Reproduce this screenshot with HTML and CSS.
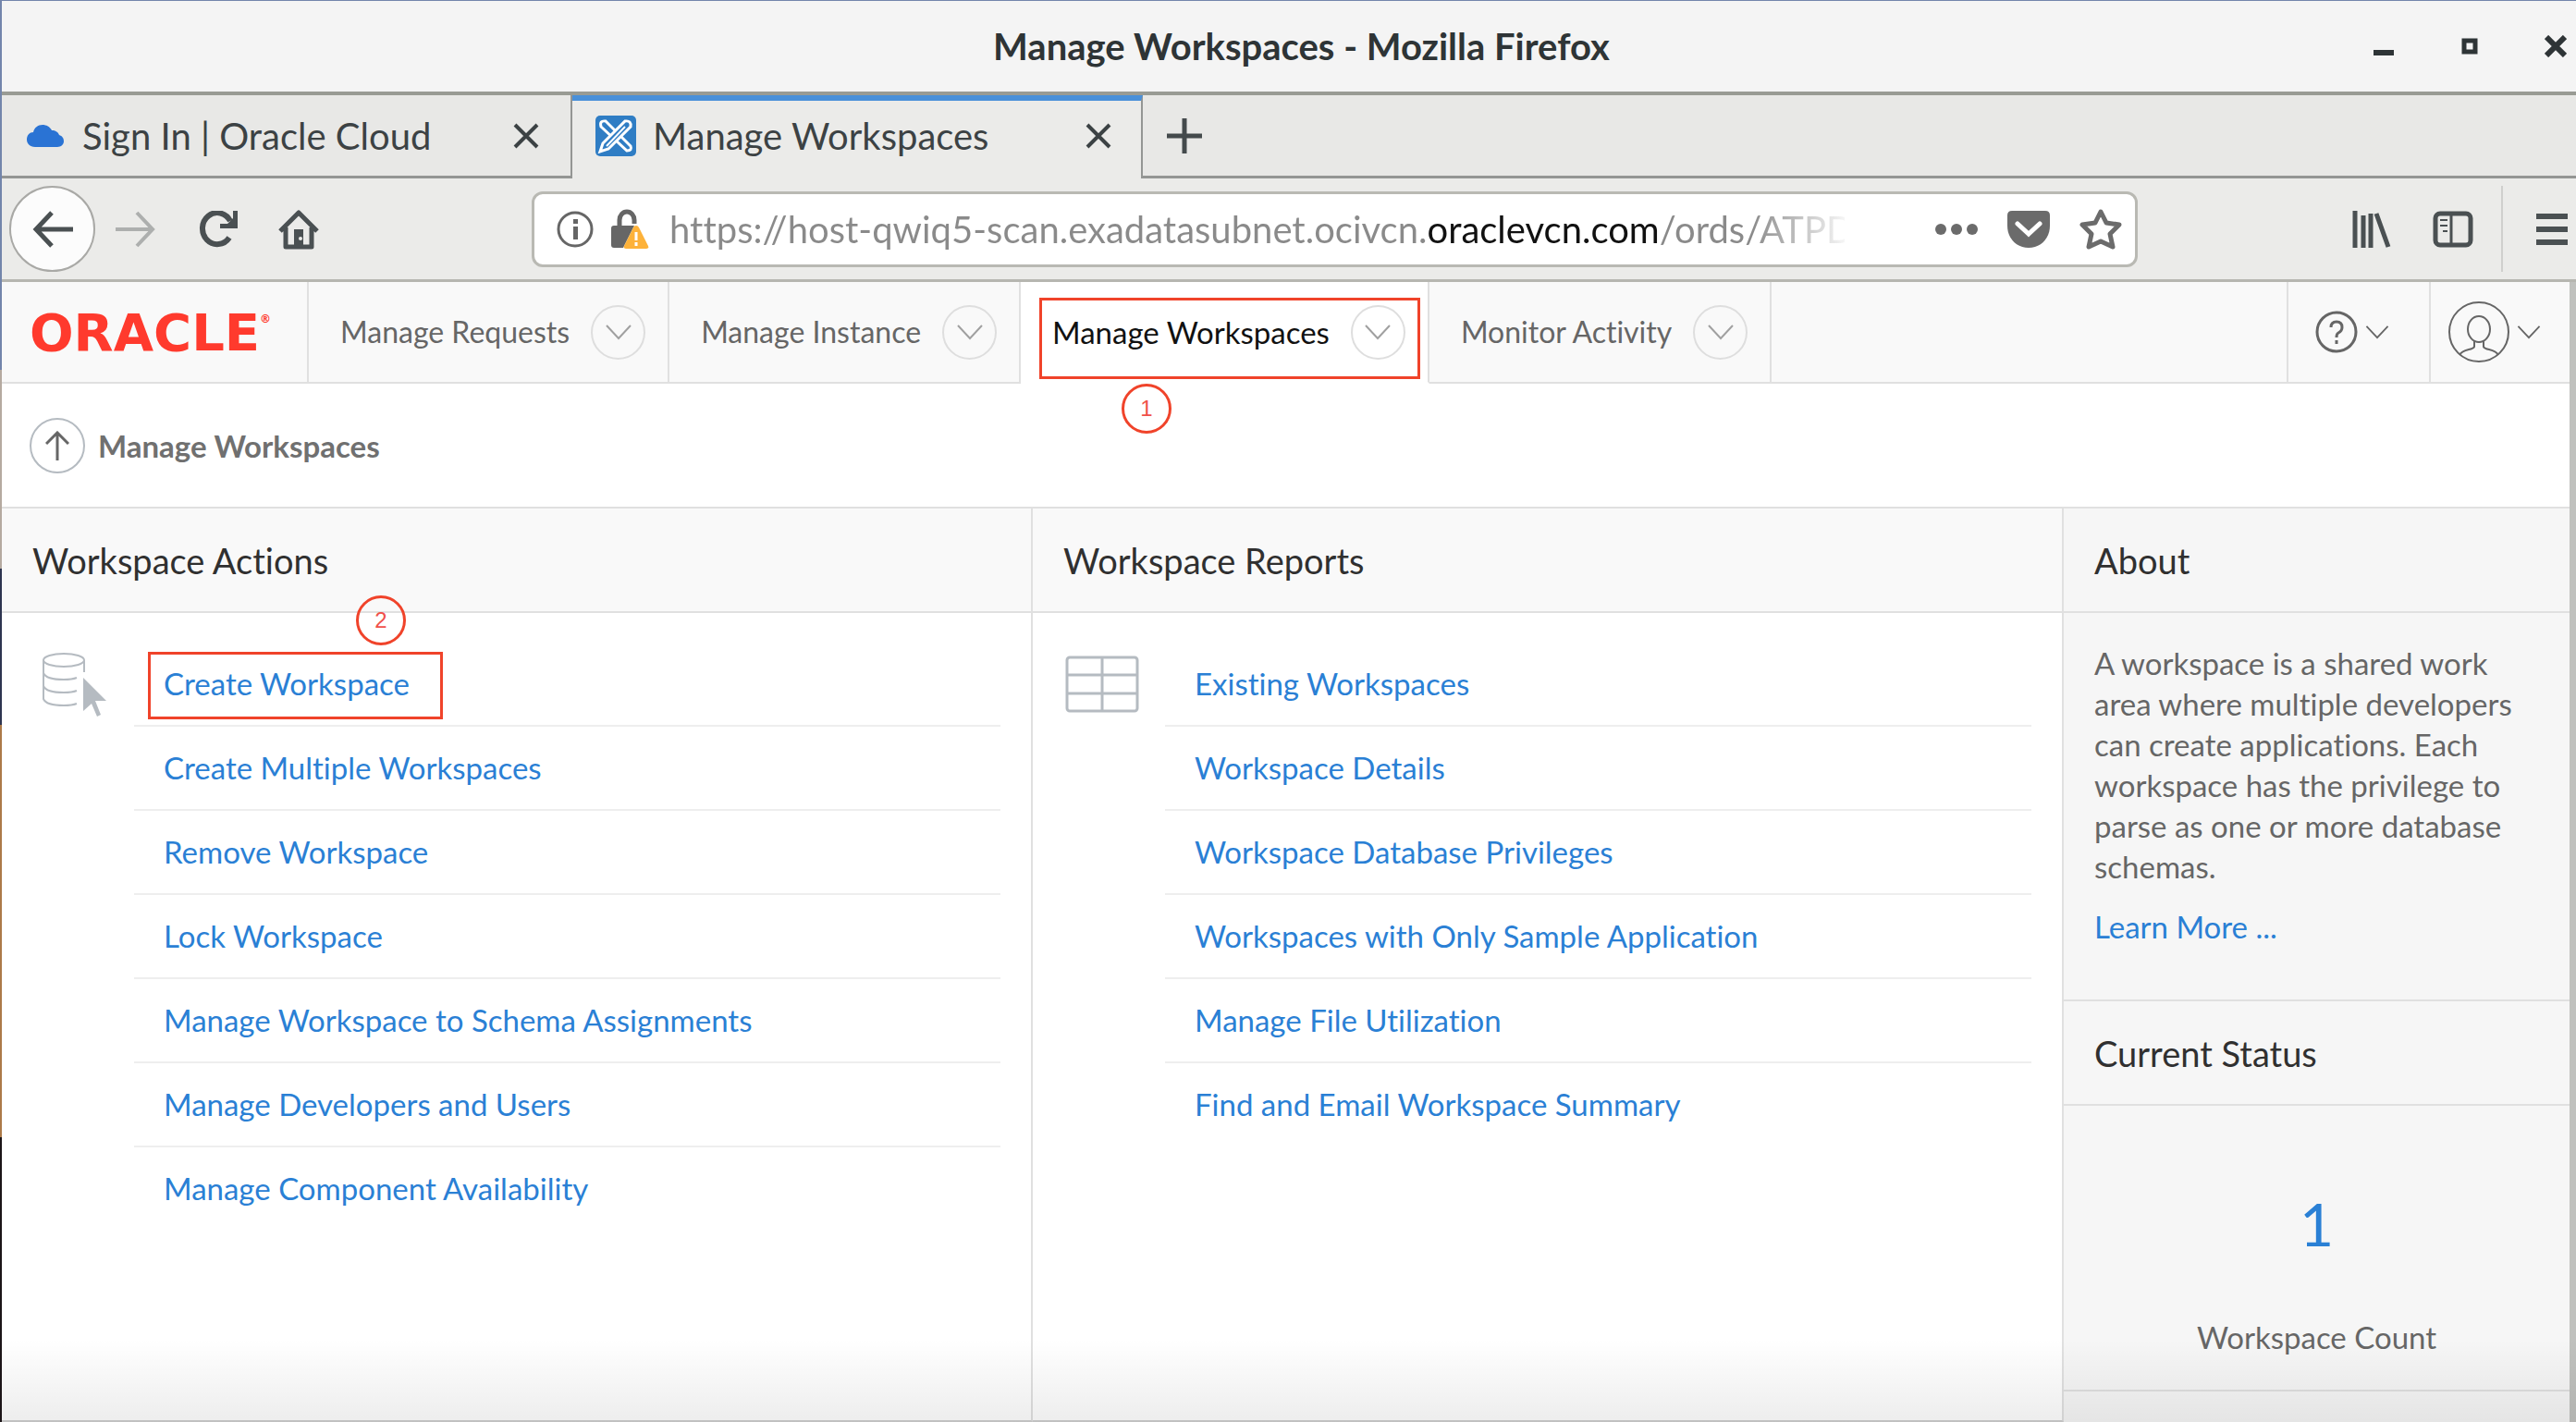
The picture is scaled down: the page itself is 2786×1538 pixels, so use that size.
FILE: index.html
```html
<!DOCTYPE html>
<html lang="en">
<head>
<meta charset="utf-8">
<title>Manage Workspaces</title>
<link rel="stylesheet" href="styles.css">
</head>
<body>
<svg class="sprite" aria-hidden="true">
  <symbol id="close" viewBox="0 0 28 28"><path d="M2 2L26 26M26 2L2 26" fill="none" stroke="currentColor" stroke-width="4"/></symbol>
  <symbol id="chevron" viewBox="0 0 28 18"><path d="M1 2L14 16L27 2" fill="none" stroke="currentColor" stroke-width="2"/></symbol>
</svg>
<div class="window">
  <header class="titlebar">
    <h1 class="titlebar-text">Manage Workspaces - Mozilla Firefox</h1>
    <div class="window-buttons">
      <button aria-label="Minimize"><svg width="24" height="24" viewBox="0 0 24 24"><path d="M1 16h22v6H1z" fill="currentColor"/></svg></button>
      <button aria-label="Maximize"><svg width="24" height="24" viewBox="0 0 24 24"><path d="M6 6h12v12H6z" fill="none" stroke="currentColor" stroke-width="5"/></svg></button>
      <button aria-label="Close"><svg width="24" height="24" viewBox="0 0 24 24"><path d="M2 2L22 22M22 2L2 22" stroke="currentColor" stroke-width="6"/></svg></button>
    </div>
  </header>

  <div class="tabs">
    <div class="tab">
      <svg width="40" height="26" viewBox="0 0 40 26"><path d="M9 25C3 25 0 21 0 17c0-5 3-8 7-8C8 4 12 1 17 1c4 0 8 2 10 6 4 0 7 2 8 5 3 1 5 3 5 7 0 3-3 6-7 6z" fill="#2a73d4"/></svg>
      <span class="tab-label">Sign In | Oracle Cloud</span>
      <button aria-label="Close tab"><svg width="28" height="28"><use href="#close"/></svg></button>
    </div>
    <div class="tab tab-active">
      <svg width="44" height="44" viewBox="0 0 44 44"><rect width="44" height="44" rx="5" fill="#2f7dc4"/><g fill="none" stroke="#fff" stroke-width="3"><path d="M11 6L38 33q2 5-4 5L6 12q-2-7 5-6z"/><path fill="#2f7dc4" d="M32 6q7-1 6 6L14 36l-9 3 3-9z"/><path d="M32 12L12 33" stroke-width="2"/></g></svg>
      <span class="tab-label">Manage Workspaces</span>
      <button aria-label="Close tab"><svg width="28" height="28"><use href="#close"/></svg></button>
    </div>
    <button class="tab-new" aria-label="New tab"><svg width="38" height="38" viewBox="0 0 38 38"><path d="M19 0v38M0 19h38" stroke="currentColor" stroke-width="5"/></svg></button>
  </div>

  <div class="toolbar">
    <button class="back" aria-label="Back"><svg width="44" height="40" viewBox="0 0 44 40"><path d="M21 2L4 20L21 38M3 20H44" fill="none" stroke="currentColor" stroke-width="5"/></svg></button>
    <button class="forward" aria-label="Forward" disabled><svg width="44" height="40" viewBox="0 0 44 40"><path d="M23 2L40 20L23 38M41 20H0" fill="none" stroke="currentColor" stroke-width="4"/></svg></button>
    <button class="reload" aria-label="Reload"><svg width="44" height="40" viewBox="0 0 44 40"><path d="M33 29A16 17 0 1 1 34 11" fill="none" stroke="currentColor" stroke-width="6"/><path d="M42 0V19H23V14H31L37 8V0z" fill="currentColor"/></svg></button>
    <button class="home" aria-label="Home"><svg width="44" height="44" viewBox="0 0 44 44"><path d="M2 24L22 4L42 24M8 20V41H36V20" fill="none" stroke="currentColor" stroke-width="5" stroke-linejoin="round"/><path d="M17 22h10v20H17z" fill="currentColor"/><circle cx="24" cy="32" r="2" fill="#ebebe9"/></svg></button>
    <div class="urlbar">
      <svg width="40" height="40" viewBox="0 0 40 40"><circle cx="20" cy="20" r="18" fill="none" stroke="#666" stroke-width="3"/><path d="M18 9h5v5h-5zM18 17h5v14h-5z" fill="#666"/></svg>
      <svg width="42" height="44" viewBox="0 0 42 44"><path d="M10 18V12a8 9 0 0 1 16 0v4" fill="none" stroke="#666" stroke-width="5"/><path d="M4 18H26L14 42H4q-3 0-3-3V21q0-3 3-3z" fill="#666"/><path d="M28 18q2 0 3 2l10 20q1 3-2 3H17q-3 0-2-3L25 20q1-2 3-2z" fill="#fdb23a"/><path d="M28 25v9M28 36v4" stroke="#fff" stroke-width="3"/></svg>
      <input class="url" type="text" aria-label="Address" value="https://host-qwiq5-scan.exadatasubnet.ocivcn.oraclevcn.com/ords/ATPD">
      <button aria-label="Page actions"><svg width="46" height="12" viewBox="0 0 46 12"><g fill="#6b6b6b"><circle cx="6" cy="6" r="6"/><circle cx="23" cy="6" r="6"/><circle cx="40" cy="6" r="6"/></g></svg></button>
      <button aria-label="Save to Pocket"><svg width="46" height="40" viewBox="0 0 46 40"><path d="M5 0H41q5 0 5 5V16C46 30 36 40 23 40S0 30 0 16V5Q0 0 5 0z" fill="#6b6b6b"/><path d="M11 14L23 25L35 14" fill="none" stroke="#fff" stroke-width="5" stroke-linecap="round"/></svg></button>
      <button aria-label="Bookmark"><svg width="46" height="46" viewBox="0 0 46 46"><path d="M23 4L29 16L43 18L33 28L36 42L23 36L10 42L13 28L3 18L17 16z" fill="none" stroke="#6b6b6b" stroke-width="5" stroke-linejoin="round"/></svg></button>
    </div>
    <div class="toolbar-end">
      <button aria-label="Library"><svg width="44" height="40" viewBox="0 0 44 40"><path d="M3 0V40M12 5V40M20 3V40M26 3L39 39" stroke="currentColor" stroke-width="5"/></svg></button>
      <button aria-label="Sidebars"><svg width="44" height="40" viewBox="0 0 44 40"><rect x="3" y="3" width="38" height="34" rx="5" fill="none" stroke="currentColor" stroke-width="5"/><path d="M20 3V37" stroke="currentColor" stroke-width="3"/><path d="M8 10h8M8 16h8M11 22h5" stroke="currentColor" stroke-width="2"/></svg></button>
      <button class="menu" aria-label="Menu"><svg width="34" height="34" viewBox="0 0 34 34"><path d="M0 3H34M0 17H34M0 31H34" stroke="currentColor" stroke-width="6"/></svg></button>
    </div>
  </div>

  <div class="page">
    <nav class="nav">
      <a class="logo" href="#">ORACLE<sup>®</sup></a>
      <div class="nav-item"><a href="#">Manage Requests</a><button aria-label="Open Manage Requests"><svg width="28" height="18"><use href="#chevron"/></svg></button></div>
      <div class="nav-item"><a href="#">Manage Instance</a><button aria-label="Open Manage Instance"><svg width="28" height="18"><use href="#chevron"/></svg></button></div>
      <div class="nav-item nav-current"><a href="#">Manage Workspaces</a><button aria-label="Open Manage Workspaces"><svg width="28" height="18"><use href="#chevron"/></svg></button><span class="mark mark-nav"></span><span class="step step-nav">1</span></div>
      <div class="nav-item"><a href="#">Monitor Activity</a><button aria-label="Open Monitor Activity"><svg width="28" height="18"><use href="#chevron"/></svg></button></div>
      <div class="nav-fill"></div>
      <button class="nav-tool" aria-label="Help">
        <svg width="46" height="46" viewBox="0 0 46 46"><circle cx="23" cy="23" r="21" fill="none" stroke="currentColor" stroke-width="3"/><path d="M17 18q0-6 6-6t6 6q0 4-4 6q-2 1-2 5M23 32v4" fill="none" stroke="currentColor" stroke-width="3"/></svg>
        <svg width="26" height="16"><use href="#chevron"/></svg>
      </button>
      <button class="nav-tool nav-user" aria-label="Account">
        <svg width="66" height="66" viewBox="0 0 66 66"><g fill="none" stroke="currentColor" stroke-width="2"><circle cx="33" cy="33" r="32"/><ellipse cx="33" cy="30" rx="12" ry="14"/><path d="M28 43v6q-1 2-6 3-8 2-10 6M38 43v6q1 2 6 3 8 2 10 6"/></g></svg>
        <svg width="26" height="16"><use href="#chevron"/></svg>
      </button>
    </nav>

    <div class="crumb">
      <a class="up" href="#" aria-label="Up"><svg width="26" height="32" viewBox="0 0 26 32"><path d="M13 32V2M1 14L13 2L25 14" fill="none" stroke="currentColor" stroke-width="3"/></svg></a>
      <strong>Manage Workspaces</strong>
    </div>

    <main class="columns">
      <section class="region">
        <h2>Workspace Actions</h2>
        <div class="region-body">
          <svg width="72" height="72" viewBox="0 0 72 72"><g fill="none" stroke="#b5bbc1" stroke-width="2"><ellipse cx="24" cy="9" rx="22" ry="7"/><path d="M2 9V51q3 7 22 7 9 0 14-2M46 9V22M2 23q3 7 22 7 9 0 14-2M2 37q3 7 22 7 9 0 14-2"/></g><path d="M45 28L70 53H58L64 68L60 70L54 56L45 64z" fill="#b5bbc1"/></svg>
          <ul>
            <li><a href="#">Create Workspace</a><span class="mark mark-link"></span><span class="step step-link">2</span></li>
            <li><a href="#">Create Multiple Workspaces</a></li>
            <li><a href="#">Remove Workspace</a></li>
            <li><a href="#">Lock Workspace</a></li>
            <li><a href="#">Manage Workspace to Schema Assignments</a></li>
            <li><a href="#">Manage Developers and Users</a></li>
            <li><a href="#">Manage Component Availability</a></li>
          </ul>
        </div>
      </section>
      <section class="region">
        <h2>Workspace Reports</h2>
        <div class="region-body">
          <svg width="80" height="72" viewBox="0 0 80 72"><g fill="none" stroke="#b5bbc1" stroke-width="3"><rect x="2" y="6" width="76" height="58" rx="3"/><path d="M40 6V64M2 25H78M2 45H78"/></g></svg>
          <ul>
            <li><a href="#">Existing Workspaces</a></li>
            <li><a href="#">Workspace Details</a></li>
            <li><a href="#">Workspace Database Privileges</a></li>
            <li><a href="#">Workspaces with Only Sample Application</a></li>
            <li><a href="#">Manage File Utilization</a></li>
            <li><a href="#">Find and Email Workspace Summary</a></li>
          </ul>
        </div>
      </section>
      <aside class="side">
        <h2>About</h2>
        <div class="about">
          <p>A workspace is a shared work area where multiple developers can create applications. Each workspace has the privilege to parse as one or more database schemas.</p>
          <p><a href="#">Learn More ...</a></p>
        </div>
        <h2>Current Status</h2>
        <div class="status">
          <a href="#">1</a>
          <span>Workspace Count</span>
        </div>
      </aside>
    </main>
  </div>
</div>
</body>
</html>
```
FILE: styles.css
```css
* { box-sizing: border-box; }

body {
  margin: 0;
  padding: 1px 0 0 2px;
  min-height: 100vh;
  display: flex;
  font-family: Lato, "Noto Sans", sans-serif;
  font-size: 33px;
  font-variant-ligatures: none;
  line-height: 44px;
  color: #666;
  background: linear-gradient(#7385ab 0 26%, #b5aaa0 26% 40%, #2e3550 40% 51%, #ac7a48 51% 80%, #1c1518 80%);
}

.sprite { position: absolute; width: 0; height: 0; }
svg { display: block; flex: none; }
h1, h2, p, ul { margin: 0; padding: 0; font-weight: 400; }
ul { list-style: none; }
a { color: #2a80d5; text-decoration: none; }
button { margin: 0; padding: 0; border: 0; background: none; color: inherit; font: inherit; }

.window {
  position: relative;
  flex: 1;
  display: flex;
  flex-direction: column;
  min-width: 0;
}
.window::after {
  content: "";
  position: absolute;
  inset: auto 0 0;
  height: 90px;
  background: linear-gradient(transparent, rgba(0, 0, 0, .07));
  pointer-events: none;
}

/* Browser chrome */
.titlebar {
  display: grid;
  grid-template-columns: 258px 1fr 221px;
  align-items: center;
  height: 102px;
  padding-right: 10px;
  background: #f4f4f4;
  border-bottom: 4px solid #999b94;
  color: #2e3436;
}
.titlebar-text { grid-column: 2; text-align: center; font-size: 40px; font-weight: 700; line-height: 50px; }
.window-buttons { display: flex; justify-content: flex-end; gap: 69px; }

.tabs {
  display: flex;
  height: 90px;
  background: #e8e8e6;
  border-bottom: 3px solid #949694;
  color: #3c4244;
  font-size: 40px;
}
.tab {
  display: flex;
  align-items: center;
  gap: 20px;
  width: 617px;
  padding: 0 34px 0 27px;
  border-right: 2px solid #949694;
}
.tab-label { flex: 1; white-space: nowrap; }
.tab-active {
  height: 90px;
  padding: 0 32px 8px 25px;
  gap: 18px;
  background: #ebebe9;
  border-top: 6px solid #4a90d9;
}
.tab-new { align-self: center; margin-left: 26px; color: #444a4c; }

.toolbar {
  display: flex;
  align-items: center;
  height: 112px;
  padding: 0 9px 0 8px;
  background: #ebebe9;
  border-bottom: 3px solid #b6b6b0;
  color: #4a5052;
}
.back {
  display: grid;
  place-items: center;
  width: 93px;
  height: 93px;
  border: 2px solid #a9a9a6;
  border-radius: 50%;
  background: #fcfcfc;
}
.forward { margin-left: 22px; color: #adafae; }
.reload { margin-left: 46px; }
.home { margin-left: 42px; }
.urlbar {
  flex: 1;
  display: flex;
  align-items: center;
  gap: 18px;
  height: 82px;
  margin: 0 232px 0 230px;
  padding: 0 14px 0 24px;
  min-width: 0;
  background: #fff;
  border: 3px solid #b9b9b3;
  border-radius: 12px;
}
.url {
  flex: 1;
  min-width: 0;
  margin: 0 80px 0 4px;
  padding: 0;
  border: 0;
  outline: 0;
  font: inherit;
  font-size: 40px;
  line-height: 56px;
  color: transparent;
  background: linear-gradient(to right, #8a8a8a 0 819px, #111 819px 1072px, #8a8a8a 1072px 1170px, transparent 1280px);
  -webkit-background-clip: text;
  background-clip: text;
}
.urlbar button + button { margin-left: 14px; }
.toolbar-end { display: flex; align-items: center; gap: 43px; }
.menu {
  display: grid;
  place-items: center;
  height: 93px;
  margin-left: -13px;
  padding-left: 36px;
  border-left: 2px solid #cfcfcd;
}

/* Application */
.page {
  flex: 1;
  display: flex;
  flex-direction: column;
  background: #fff;
  border-right: 7px solid #c0c1be;
}

.nav { display: flex; height: 110px; background: #f9f9f9; font-size: 32px; }
.nav > * { border-bottom: 2px solid #e0e0e0; border-right: 2px solid #e0e0e0; }
.logo {
  display: flex;
  align-items: center;
  width: 332px;
  padding-left: 30px;
  color: #ff3a2d;
  font: 700 56px "DejaVu Sans", sans-serif;
}
.logo sup { align-self: flex-start; margin-top: 32px; font-size: 12px; line-height: 16px; }
.nav-item {
  position: relative;
  display: flex;
  align-items: center;
  gap: 23px;
  padding: 0 24px 0 34px;
}
.nav-item a { color: #666; white-space: nowrap; }
.nav-item button {
  display: grid;
  place-items: center;
  width: 59px;
  height: 59px;
  border: 2px solid #dedede;
  border-radius: 50%;
  color: #a0a0a0;
}
.nav .nav-current { background: #fff; border-bottom-color: #fff; font-size: 33px; }
.nav .nav-current a { color: #111; }
.nav-fill { flex: 1; }
.nav-tool {
  display: flex;
  align-items: center;
  gap: 8px;
  padding: 0 43px 0 29px;
  color: #666;
}
.nav .nav-user { padding: 0 31px 0 19px; border-right: 0; }

.mark { position: absolute; border: 3px solid #f0432a; pointer-events: none; }
.mark-nav { inset: 17px 8px 3px 20px; }
.mark-link { left: 15px; top: 10px; width: 319px; height: 73px; }
.step {
  position: absolute;
  display: grid;
  place-items: center;
  width: 54px;
  height: 54px;
  border: 3px solid #f0432a;
  border-radius: 50%;
  color: #f0504a;
  font: 24px "Liberation Sans", sans-serif;
}
.step-nav { left: 109px; top: 110px; }
.step-link { left: 240px; top: -51px; }

.crumb {
  display: flex;
  align-items: center;
  gap: 14px;
  height: 135px;
  padding: 0 30px 0 30px;
  border-bottom: 2px solid #e0e0e0;
  color: #707070;
}
.up {
  display: grid;
  place-items: center;
  width: 60px;
  height: 60px;
  border: 2px solid #b5bbc1;
  border-radius: 50%;
  color: #666;
}

.columns {
  flex: 1;
  display: grid;
  grid-template-columns: 1fr 1fr 547px;
}
h2 {
  height: 113px;
  padding: 0 33px;
  border-bottom: 2px solid #e0e0e0;
  color: #303030;
  font-size: 38px;
  line-height: 112px;
}
.region {
  border-right: 2px solid #e0e0e0;
  border-bottom: 2px solid #d0d0d0;
}
.region h2 { background: #f9f9f9; }
.region-body {
  display: grid;
  grid-template-columns: 101px 1fr;
  padding: 32px 33px 0 42px;
}
.region-body > svg { margin-top: 10px; margin-left: -7px; }
.region:first-child .region-body > svg { margin-left: 1px; }
li {
  position: relative;
  padding: 22px 32px 23px;
  border-bottom: 2px solid #eee;
}
li:last-child { border-bottom: 0; }

.side { background: #f6f6f6; }
.about {
  padding: 32px 30px 57px 33px;
  border-bottom: 2px solid #e0e0e0;
}
.about p + p { margin-top: 21px; }
.status {
  display: flex;
  flex-direction: column;
  align-items: center;
  gap: 60px;
  padding: 88px 0 35px;
  border-bottom: 2px solid #e0e0e0;
}
.status a { font-size: 64px; line-height: 80px; }
```
